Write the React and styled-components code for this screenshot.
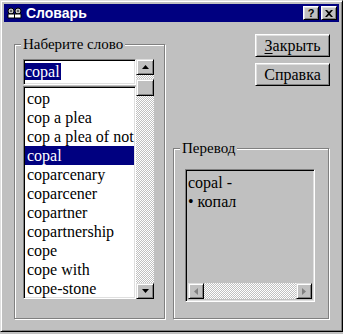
import React from "react";
import styled, { createGlobalStyle } from "styled-components";

const GlobalStyle = createGlobalStyle`
  html, body {
    margin: 0;
    padding: 0;
    background: #c0c0c0;
  }
  body {
    font-family: "Liberation Serif", "Times New Roman", serif;
  }
  * {
    box-sizing: border-box;
  }
`;

const words = [
  "cop",
  "cop a plea",
  "cop a plea of not",
  "copal",
  "coparcenary",
  "coparcener",
  "copartner",
  "copartnership",
  "cope",
  "cope with",
  "cope-stone",
];

export default function App() {
  return (
    <>
      <GlobalStyle />
      <Window>
        <TitleBar>
          <BookIcon />
          <Title>Словарь</Title>
          <TitleButtons>
            <TitleButton>?</TitleButton>
            <TitleButton>
              <svg width="8" height="7" viewBox="0 0 8 7">
                <path d="M0 0h2l2 2 2-2h2L5 3.5 8 7H6L4 5 2 7H0l3-3.5z" fill="#000" />
              </svg>
            </TitleButton>
          </TitleButtons>
        </TitleBar>
        <Body>
          <GroupBox $top={10}>
            <Caption>Наберите слово</Caption>
            <Combo>
              <Edit>
                <Selected>copal</Selected>
              </Edit>
              <List>
                {words.map((w) => (
                  <ListItem key={w} $active={w === "copal"}>
                    {w}
                  </ListItem>
                ))}
              </List>
              <VScroll>
                <ScrollButton>
                  <Arrow dir="up" />
                </ScrollButton>
                <Track>
                  <Thumb />
                </Track>
                <ScrollButton>
                  <Arrow dir="down" />
                </ScrollButton>
              </VScroll>
            </Combo>
          </GroupBox>
          <RightColumn>
            <Buttons>
              <PushButton>
                <u>З</u>акрыть
              </PushButton>
              <PushButton>Справка</PushButton>
            </Buttons>
            <TranslationGroup>
              <Caption>Перевод</Caption>
              <TextBox>
                <TextArea>
                  <div>copal -</div>
                  <div>• копал</div>
                </TextArea>
                <HScroll>
                  <ScrollButton $w={16}>
                    <Arrow dir="left" disabled />
                  </ScrollButton>
                  <Track />
                  <ScrollButton $w={16}>
                    <Arrow dir="right" disabled />
                  </ScrollButton>
                </HScroll>
              </TextBox>
            </TranslationGroup>
          </RightColumn>
        </Body>
      </Window>
    </>
  );
}

// два раскрытых тома, как на иконке словаря
const BookIcon = () => (
  <svg width="15" height="12" viewBox="0 0 15 12">
    <circle cx="4" cy="4" r="3" fill="#c0c0c0" stroke="#000" />
    <circle cx="11" cy="4" r="3" fill="#c0c0c0" stroke="#000" />
    <path d="M1 7h13v4H1z" fill="#fff" stroke="#000" />
    <path d="M7.5 7v4" stroke="#000" />
    <path d="M3 4h2M10 4h2" stroke="#000" />
  </svg>
);

const Arrow = ({ dir, disabled }) => {
  const shapes = {
    up: "M3.5 0L7 4H0z",
    down: "M0 0h7L3.5 4z",
    left: "M4 0v7L0 3.5z",
    right: "M0 0l4 3.5L0 7z",
  };
  const horizontal = dir === "left" || dir === "right";
  return (
    <svg width={horizontal ? 4 : 7} height={horizontal ? 7 : 4} viewBox={horizontal ? "0 0 4 7" : "0 0 7 4"}>
      <path d={shapes[dir]} fill={disabled ? "#808080" : "#000"} />
    </svg>
  );
};

const raised = `
  border: 1px solid;
  border-color: #fff #000 #000 #fff;
  box-shadow: inset 1px 1px 0 #dfdfdf, inset -1px -1px 0 #808080;
`;

const sunken = `
  border: 1px solid;
  border-color: #808080 #fff #fff #808080;
  box-shadow: inset 1px 1px 0 #000, inset -1px -1px 0 #dfdfdf;
`;

const Window = styled.div`
  width: 343px;
  height: 332px;
  display: flex;
  flex-direction: column;
  background: #c0c0c0;
  padding: 2px;
  border: 1px solid;
  border-color: #dfdfdf #000 #000 #dfdfdf;
  box-shadow: inset 1px 1px 0 #fff, inset -1px -1px 0 #808080;
`;

const TitleBar = styled.div`
  height: 18px;
  margin: 1px;
  margin-bottom: 0;
  background: #000080;
  display: flex;
  align-items: center;
  padding: 0 2px 0 3px;
`;

const Title = styled.span`
  margin-left: 4px;
  color: #fff;
  font-family: "Liberation Sans", Arial, sans-serif;
  font-weight: bold;
  font-size: 14px;
  line-height: 18px;
`;

const TitleButtons = styled.div`
  margin-left: auto;
  display: flex;
  gap: 2px;
`;

const TitleButton = styled.div`
  width: 16px;
  height: 14px;
  background: #c0c0c0;
  ${raised}
  display: flex;
  align-items: center;
  justify-content: center;
  font-family: "Liberation Sans", Arial, sans-serif;
  font-weight: bold;
  font-size: 11px;
  line-height: 1;
  color: #000;
`;

const Body = styled.div`
  flex: 1;
  display: flex;
  gap: 8px;
  padding: 12px 10px 10px 11px;
`;

const GroupBox = styled.div`
  position: relative;
  width: 151px;
  margin-top: ${(p) => p.$top || 0}px;
  border: 1px solid #808080;
  box-shadow: inset 1px 1px 0 #fff, 1px 1px 0 #fff;
  padding: 14px 0 0 8px;
`;

const Caption = styled.span`
  position: absolute;
  top: -9px;
  left: 6px;
  padding: 0 2px;
  background: #c0c0c0;
  font-size: 15px;
  line-height: 17px;
  color: #000;
`;

const Combo = styled.div`
  display: grid;
  grid-template-columns: 113px 18px;
  grid-template-rows: 26px 213px;
  row-gap: 1px;
  height: 240px;
`;

const Edit = styled.div`
  background: #fff;
  ${sunken}
  padding: 2px 0 0 1px;
  font-size: 16px;
  line-height: 19px;
`;

const Selected = styled.span`
  background: #000080;
  color: #fff;
  padding-right: 1px;
`;

const List = styled.div`
  grid-column: 1;
  grid-row: 2;
  background: #fff;
  ${sunken}
  padding: 2px 1px 0 1px;
  overflow: hidden;
`;

const ListItem = styled.div`
  height: 19px;
  line-height: 19px;
  font-size: 16px;
  padding-left: 2px;
  white-space: nowrap;
  background: ${(p) => (p.$active ? "#000080" : "transparent")};
  color: ${(p) => (p.$active ? "#fff" : "#000")};
`;

const VScroll = styled.div`
  grid-column: 2;
  grid-row: 1 / 3;
  display: flex;
  flex-direction: column;
`;

const ScrollButton = styled.div`
  flex: none;
  width: ${(p) => p.$w || 18}px;
  height: 16px;
  background: #c0c0c0;
  border: 1px solid;
  border-color: #dfdfdf #000 #000 #dfdfdf;
  box-shadow: inset 1px 1px 0 #fff, inset -1px -1px 0 #808080;
  display: flex;
  align-items: center;
  justify-content: center;
`;

const Track = styled.div`
  flex: 1;
  background-color: #c0c0c0;
  background-image: conic-gradient(#fff 25%, #c0c0c0 0 50%, #fff 0 75%, #c0c0c0 0);
  background-size: 2px 2px;
`;

const Thumb = styled.div`
  margin-top: 4px;
  height: 17px;
  background: #c0c0c0;
  border: 1px solid;
  border-color: #dfdfdf #000 #000 #dfdfdf;
  box-shadow: inset 1px 1px 0 #fff, inset -1px -1px 0 #808080;
`;

const RightColumn = styled.div`
  width: 156px;
  display: flex;
  flex-direction: column;
`;

const Buttons = styled.div`
  display: flex;
  flex-direction: column;
  align-items: flex-end;
  gap: 6px;
`;

const PushButton = styled.button`
  width: 75px;
  height: 23px;
  margin-right: -1px;
  padding: 0;
  background: #c0c0c0;
  ${raised}
  font-family: "Liberation Serif", "Times New Roman", serif;
  font-size: 16px;
  line-height: 19px;
  color: #000;
  u {
    text-decoration-thickness: 1px;
    text-underline-offset: 2px;
  }
`;

const TranslationGroup = styled(GroupBox)`
  width: 156px;
  height: 171px;
  margin-top: auto;
  padding: 20px 0 0 11px;
`;

const TextBox = styled.div`
  width: 130px;
  height: 133px;
  ${sunken}
  padding: 2px;
  display: flex;
  flex-direction: column;
`;

const TextArea = styled.div`
  flex: 1;
  padding: 1px 0 0 0;
  font-size: 16px;
  line-height: 19px;
  color: #000;
`;

const HScroll = styled.div`
  height: 16px;
  display: flex;
`;
